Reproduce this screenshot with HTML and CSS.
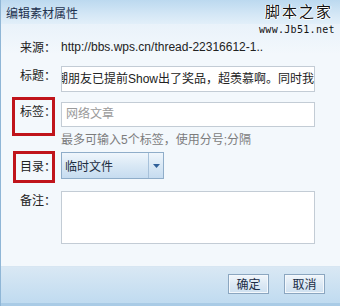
FILE: index.html
```html
<!DOCTYPE html>
<html lang="zh-CN">
<head>
<meta charset="utf-8">
<title>编辑素材属性</title>
<link rel="stylesheet" href="styles.css">
</head>
<body>
<div class="dialog">
  <div class="titlebar">
    <span class="title">编辑素材属性</span>
    <div class="wm">
      <div class="wm-cn">脚本之家</div>
      <div class="wm-en">www.Jb51.net</div>
    </div>
  </div>
  <div class="content">
    <div class="row row-src">
      <span class="lbl">来源：</span>
      <div class="src">http://bbs.wps.cn/thread-22316612-1..</div>
    </div>
    <div class="row row-title">
      <span class="lbl">标题：</span>
      <div class="field"><span class="scrolled">潮朋友已提前Show出了奖品，超羡慕啊。同时我</span></div>
    </div>
    <div class="row row-tags">
      <span class="lbl marked mark-tags">标签：</span>
      <div class="field placeholder">网络文章</div>
    </div>
    <div class="hint">最多可输入5个标签，使用分号;分隔</div>
    <div class="row row-dir">
      <span class="lbl marked mark-dir">目录：</span>
      <div class="select">
        <span class="sel-text">临时文件</span>
        <span class="sel-btn"><svg width="7" height="4" viewBox="0 0 7 4"><path d="M0 0h7L3.5 4z" fill="#2f5f98"/></svg></span>
      </div>
    </div>
    <div class="row row-note">
      <span class="lbl">备注：</span>
      <div class="field area"></div>
    </div>
  </div>
  <div class="footer">
    <button class="btn">确定</button>
    <button class="btn">取消</button>
  </div>
</div>
</body>
</html>
```
FILE: styles.css
```css
html, body {
  margin: 0;
  padding: 0;
}
body {
  width: 340px;
  height: 306px;
  overflow: hidden;
  font-family: "Liberation Sans", "Noto Sans CJK SC", sans-serif;
  font-size: 12px;
  color: #333;
}
.dialog {
  position: relative;
  width: 340px;
  height: 306px;
  box-sizing: border-box;
  border-left: 1px solid #8fb6d6;
  display: flex;
  flex-direction: column;
  background: #f3f8fc;
}
.titlebar {
  position: relative;
  height: 24px;
  flex: none;
  background: linear-gradient(#bcd9ef, #d4e7f6 60%, #e2eff9);
  display: flex;
  align-items: center;
  padding-left: 5px;
}
.title {
  font-family: "Noto Sans CJK SC", sans-serif;
  font-size: 12px;
  color: #1f3350;
}
.wm {
  position: absolute;
  left: 258px;
  top: 2px;
  width: 78px;
  z-index: 2;
}
.wm-cn {
  font-family: "Noto Sans CJK SC", sans-serif;
  font-size: 15px;
  line-height: 18px;
  color: #111;
  letter-spacing: 2px;
  padding-left: 6px;
  text-shadow: 1px 0 #fff, -1px 0 #fff, 0 1px #fff;
}
.wm-en {
  font-family: "DejaVu Sans Mono", monospace;
  font-size: 10px;
  line-height: 12px;
  margin-top: 4px;
  color: #111;
  letter-spacing: 0.3px;
}
.content {
  flex: 1;
  display: flex;
  flex-direction: column;
  padding-top: 13px;
  background: linear-gradient(#e9f2fa, #f3f8fc 30px, #f3f8fc);
}
.row {
  display: flex;
}
.lbl {
  position: relative;
  width: 41px;
  padding-left: 19px;
  line-height: 18px;
  flex: none;
  font-family: "Noto Sans CJK SC", sans-serif;
  color: #222;
}
.row-src {
  height: 20px;
  align-items: center;
}
.src {
  color: #222;
  white-space: nowrap;
}
.field {
  width: 254px;
  box-sizing: border-box;
  background: #fff;
  border: 1px solid #c3ccd5;
  padding-left: 4px;
  white-space: nowrap;
  overflow: hidden;
  font-family: "Liberation Sans", "Noto Sans CJK SC", sans-serif;
  color: #222;
}
.row-title {
  margin-top: 9px;
}
.row-title .field {
  height: 26px;
  line-height: 24px;
}
.scrolled {
  display: inline-block;
  margin-left: -10px;
}
.row-tags {
  margin-top: 10px;
}
.row-tags .field {
  height: 25px;
  line-height: 23px;
}
.placeholder {
  color: #9a9a9a;
}
.hint {
  margin-top: 4px;
  margin-left: 60px;
  line-height: 18px;
  color: #7c7c7c;
}
.row-dir {
  margin-top: 3px;
  align-items: center;
}
.select {
  width: 103px;
  height: 27px;
  box-sizing: border-box;
  border: 1px solid #8fadc9;
  background: linear-gradient(#eff6fc, #d9e8f5 50%, #c6dcf0);
  display: flex;
  align-items: stretch;
}
.sel-text {
  flex: 1;
  padding-left: 3px;
  line-height: 25px;
  color: #1c2c40;
  font-family: "Noto Sans CJK SC", sans-serif;
}
.sel-btn {
  width: 14px;
  border-left: 1px solid #a7c1da;
  display: flex;
  align-items: center;
  justify-content: center;
}
.row-note {
  margin-top: 12px;
}
.field.area {
  height: 53px;
}
.marked::after {
  content: "";
  position: absolute;
  box-sizing: border-box;
  border: 3px solid #c0141b;
}
.mark-tags::after {
  left: 11px;
  top: -5px;
  width: 43px;
  height: 39px;
}
.mark-dir::after {
  left: 12px;
  top: -6px;
  width: 42px;
  height: 32px;
}
.footer {
  flex: none;
  height: 40px;
  box-sizing: border-box;
  border-bottom: 3px solid #a9cbe6;
  border-top: 1px solid #d7e6f2;
  background: linear-gradient(#d9e8f4, #c0dbf0);
  display: flex;
  justify-content: flex-end;
  align-items: center;
  gap: 15px;
  padding-right: 15px;
  padding-bottom: 2px;
}
.btn {
  width: 41px;
  height: 20px;
  padding: 0;
  margin: 0;
  border: 1px solid #8ba6c0;
  background: linear-gradient(#f1f6fb, #dde9f4 50%, #cfe1f1);
  box-shadow: inset 0 0 0 1px #f4f8fc;
  font-family: "Noto Sans CJK SC", sans-serif;
  font-size: 12px;
  line-height: 18px;
  color: #1b2d46;
}
```
